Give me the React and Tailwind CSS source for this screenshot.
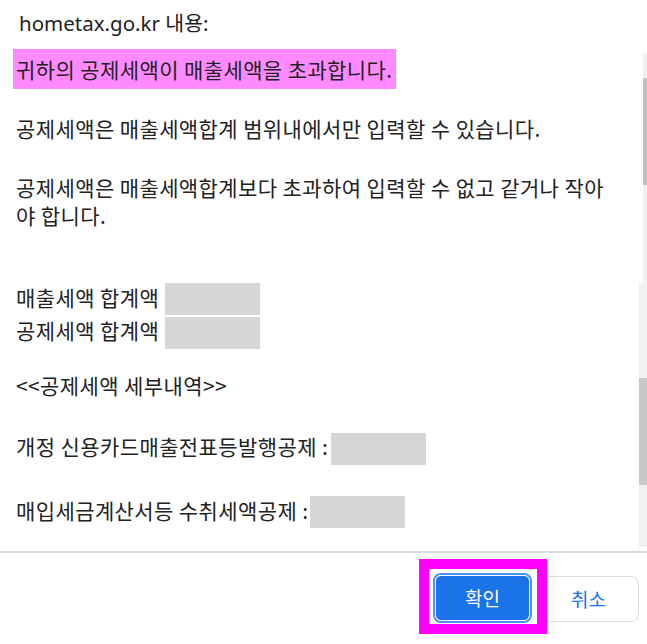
import React from "react";

const body = { fontFamily: "'Noto Sans CJK KR', 'Noto Sans', sans-serif" };

function Blank({ className }) {
  return <span className={"inline-block w-[95px] h-[32px] bg-[#d6d6d6] " + className} />;
}

export default function App() {
  return (
    <div className="w-[647px] h-[644px] bg-white flex flex-col overflow-hidden relative text-[#222222]" style={body}>
      {/* header */}
      <div className="h-[45px] pl-[19px] pt-[9px] text-[20.5px] leading-[28px] text-[#202124]" style={{ fontFamily: "'Noto Sans', 'Noto Sans CJK KR', sans-serif" }}>
        hometax.go.kr 내용:
      </div>

      {/* body */}
      <div className="h-[506px] flex flex-row">
        <div className="flex-1 overflow-hidden pl-[13px] text-[21px] tracking-[0.4px]">
          <div className="mt-[4px] inline-block h-[40px] leading-[40px] px-[3px] bg-[#ff8aff] whitespace-nowrap">
            귀하의 공제세액이 매출세액을 초과합니다.
          </div>
          <div className="pl-[3px]">
            <p className="mt-[25px] leading-[28px] whitespace-nowrap">공제세액은 매출세액합계 범위내에서만 입력할 수 있습니다.</p>
            <p className="mt-[31px] leading-[28px] whitespace-nowrap">
              공제세액은 매출세액합계보다 초과하여 입력할 수 없고 같거나 작아
              <br />
              야 합니다.
            </p>
            <div className="mt-[54px] flex items-center h-[32px] whitespace-nowrap">
              <span className="leading-[28px] -mt-[4px]">매출세액 합계액</span>
              <Blank className="ml-[6px]" />
            </div>
            <div className="mt-[2px] flex items-center h-[32px] whitespace-nowrap">
              <span className="leading-[28px] -mt-[6px]">공제세액 합계액</span>
              <Blank className="ml-[6px]" />
            </div>
            <p className="mt-[22px] leading-[28px] whitespace-nowrap">&lt;&lt;공제세액 세부내역&gt;&gt;</p>
            <div className="mt-[34px] flex items-center h-[32px] whitespace-nowrap">
              <span className="leading-[28px] -mt-[6px]">개정 신용카드매출전표등발행공제 :</span>
              <Blank className="ml-[3px]" />
            </div>
            <div className="mt-[31px] flex items-center h-[32px] whitespace-nowrap">
              <span className="leading-[28px] -mt-[4px]">매입세금계산서등 수취세액공제 :</span>
              <Blank className="ml-[1px]" />
            </div>
          </div>
        </div>

        {/* scrollbar */}
        <div className="w-[8px] flex flex-col">
          <div className="mt-[8px] h-[230px] ml-[4px] bg-[#f1f1f1] flex flex-col">
            <div className="mt-[25px] h-[107px] bg-[#c1c1c1]" />
          </div>
          <div className="flex-1 bg-[#f1f1f1] flex flex-col mb-[4px]">
            <div className="mt-[95px] h-[107px] bg-[#c8c8c8]" />
          </div>
        </div>
      </div>

      {/* divider */}
      <div className="h-[2px] bg-[#dadada]" />

      {/* footer */}
      <div className="flex-1 flex justify-end items-start pr-[8px] pt-[20px]">
        <button className="w-[99px] h-[50px] rounded-[8px] border-2 border-[#4d8ef5] p-0 bg-white">
          <span className="flex items-center justify-center w-full h-full rounded-[6px] border border-white bg-[#1a73e8] text-white text-[19px]">
            확인
          </span>
        </button>
        <button className="ml-[6px] mt-[3px] w-[101px] h-[46px] rounded-[8px] border border-[#dadce0] bg-white text-[#1a73e8] text-[19px] flex items-center justify-center">
          취소
        </button>
      </div>

      {/* annotation frame */}
      <div className="absolute left-[419px] top-[559px] w-[128px] h-[75px] border-[10px] border-[#ff00ff]" />
    </div>
  );
}
